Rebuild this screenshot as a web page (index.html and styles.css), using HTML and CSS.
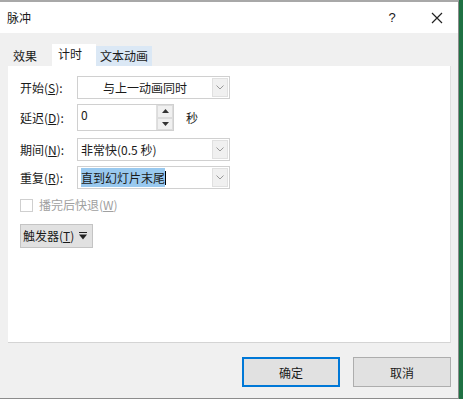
FILE: index.html
```html
<!DOCTYPE html>
<html lang="zh">
<head>
  <meta charset="UTF-8" />
  <title>脉冲</title>
  <link rel="stylesheet" href="styles.css">
</head>
<body>
  <div class="dialog">
    <div class="titlebar">
      <span class="title">脉冲</span>
      <span class="help">?</span>
      <span class="close">
        <svg width="12" height="12" viewBox="0 0 12 12"><path d="M1 1L11 11M11 1L1 11" stroke="#222" stroke-width="1.2" fill="none"/></svg>
      </span>
    </div>

    <div class="tabs">
      <div class="tab tab-effect">效果</div>
      <div class="tab active">计时</div>
      <div class="tab hover">文本动画</div>
    </div>

    <div class="panel">
      <div class="row row-start">
        <label>开始(<u>S</u>):</label>
        <div class="combo">
          <span class="value center">与上一动画同时</span>
          <span class="drop"><svg width="8" height="5" viewBox="0 0 8 5"><path d="M0.5 0.5L4 4L7.5 0.5" stroke="#999" fill="none"/></svg></span>
        </div>
      </div>

      <div class="row row-delay">
        <label>延迟(<u>D</u>):</label>
        <div class="spin">
          <span class="value top">0</span>
          <div class="spin-btns">
            <span class="spin-btn"><svg width="7" height="4" viewBox="0 0 7 4"><path d="M0 4L3.5 0L7 4Z" fill="#333"/></svg></span>
            <span class="spin-btn"><svg width="7" height="4" viewBox="0 0 7 4"><path d="M0 0L3.5 4L7 0Z" fill="#333"/></svg></span>
          </div>
        </div>
        <span class="unit">秒</span>
      </div>

      <div class="row row-period">
        <label>期间(<u>N</u>):</label>
        <div class="combo">
          <span class="value">非常快(0.5 秒)</span>
          <span class="drop"><svg width="8" height="5" viewBox="0 0 8 5"><path d="M0.5 0.5L4 4L7.5 0.5" stroke="#999" fill="none"/></svg></span>
        </div>
      </div>

      <div class="row row-repeat">
        <label>重复(<u>R</u>):</label>
        <div class="combo">
          <span class="value"><span class="selected">直到幻灯片末尾</span><span class="caret"></span></span>
          <span class="drop"><svg width="8" height="5" viewBox="0 0 8 5"><path d="M0.5 0.5L4 4L7.5 0.5" stroke="#999" fill="none"/></svg></span>
        </div>
      </div>

      <div class="check-row">
        <span class="checkbox"></span>
        <span class="check-label">播完后快退(<u>W</u>)</span>
      </div>

      <div class="trigger">
        <span>触发器(<u>T</u>)</span>
        <svg width="8" height="8" viewBox="0 0 8 8"><path d="M0 0.5H8" stroke="#222" stroke-width="1"/><path d="M0 2.5L4 7.5L8 2.5Z" fill="#222"/></svg>
      </div>
    </div>

    <div class="footer">
      <button class="btn default">确定</button>
      <button class="btn">取消</button>
    </div>
  </div>
</body>
</html>
```

FILE: styles.css
```css
html, body {
  margin: 0;
  padding: 0;
  width: 463px;
  height: 399px;
  overflow: hidden;
  background: #1f7244;
  font-family: "Noto Sans CJK SC", "Liberation Sans", sans-serif;
  font-size: 12px;
  line-height: 16px;
  color: #1a1a1a;
}

.dialog {
  width: 458px;
  height: 396px;
  background: #f0f0f0;
  border-top: 2px solid #a8a8a8;
  border-right: 1px solid #8c8c8c;
  border-bottom: 1px solid #8c8c8c;
  display: flex;
  flex-direction: column;
}

.titlebar {
  height: 31px;
  background: #fff;
  display: flex;
  align-items: center;
  padding-left: 7px;
}

.title {
  flex: 1;
}

.help {
  width: 18px;
  text-align: center;
  margin-right: 30px;
  font-family: "Liberation Sans", sans-serif;
  font-size: 13px;
}

.close {
  width: 14px;
  display: flex;
  margin-right: 13px;
}

.tabs {
  height: 33px;
  display: flex;
  align-items: flex-end;
  padding-left: 8px;
}

.tab {
  box-sizing: border-box;
  height: 20px;
  line-height: 19px;
  text-align: center;
  white-space: nowrap;
}

.tab-effect {
  width: 44px;
  text-align: left;
  padding-left: 5px;
}

.tab.active {
  width: 44px;
  height: 22px;
  line-height: 20px;
  background: #fff;
  text-align: left;
  padding-left: 6px;
}

.tab.hover {
  width: 56px;
  background: #dbe8f5;
}

.panel {
  height: 266px;
  margin: 0 7px 0 8px;
  background: #fff;
  border-bottom: 1px solid #d4d4d4;
  border-right: 1px solid #e0e0e0;
  padding: 10px 0 0 12px;
}

.row {
  display: flex;
  align-items: center;
}

.row label {
  width: 57px;
}

.row-delay {
  margin-top: 5px;
}

.row-period {
  margin-top: 7px;
}

.row-repeat {
  margin-top: 5px;
}

.combo {
  width: 150px;
  height: 21px;
  border: 1px solid #d0d0d0;
  display: flex;
  align-items: center;
  padding-right: 1px;
}

.value {
  flex: 1;
  padding-left: 3px;
  white-space: nowrap;
}

.value.center {
  text-align: center;
  padding-left: 0;
}

.value.top {
  align-self: flex-start;
  padding-top: 2px;
}

.drop {
  width: 16px;
  height: 19px;
  background: #f0f0f0;
  border: 1px solid #e0e0e0;
  box-sizing: border-box;
  display: flex;
  align-items: center;
  justify-content: center;
}

.selected {
  background: #99c9ef;
  padding: 1px 0;
}

.caret {
  display: inline-block;
  width: 1px;
  height: 14px;
  background: #000;
  vertical-align: -2px;
}

.spin {
  width: 95px;
  height: 25px;
  border: 1px solid #d0d0d0;
  display: flex;
}

.spin-btns {
  width: 16px;
  display: flex;
  flex-direction: column;
  border-left: 1px solid #e0e0e0;
}

.spin-btn {
  flex: 1;
  background: #f0f0f0;
  border: 1px solid #dcdcdc;
  display: flex;
  align-items: center;
  justify-content: center;
}

.unit {
  margin-left: 12px;
}

.check-row {
  display: flex;
  align-items: center;
  margin-top: 8px;
  color: #a0a0a0;
}

.checkbox {
  width: 11px;
  height: 11px;
  border: 1px solid #cfcfcf;
  margin-right: 6px;
}

.trigger {
  margin-top: 11px;
  width: 73px;
  height: 24px;
  background: #e1e1e1;
  border: 1px solid #c4c4c4;
  display: flex;
  align-items: center;
  justify-content: space-between;
  padding: 0 5px 0 2px;
  box-sizing: border-box;
}

.footer {
  flex: 1;
  display: flex;
  justify-content: flex-end;
  align-items: flex-start;
  padding: 14px 7px 0 0;
  gap: 13px;
}

.btn {
  width: 98px;
  height: 30px;
  background: #e1e1e1;
  border: 1px solid #adadad;
  font-family: "Noto Sans CJK SC", "Liberation Sans", sans-serif;
  font-size: 12px;
  color: #1a1a1a;
}

.btn.default {
  border: 2px solid #0078d7;
}
```
